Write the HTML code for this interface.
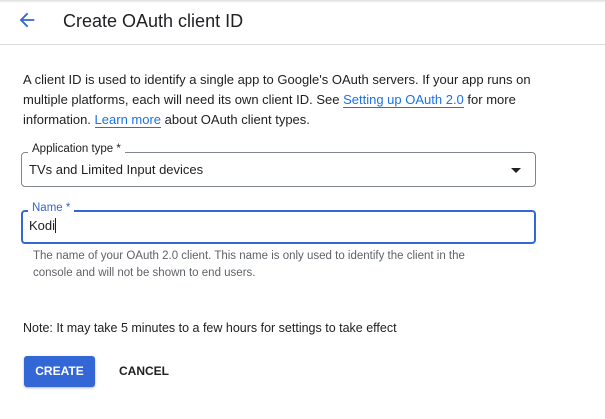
<!DOCTYPE html>
<html><head><style>
body{margin:0;width:605px;height:419px;background:#fff;font-family:"Liberation Sans",Arial,sans-serif;color:#202124;position:relative;overflow:hidden}
.a{position:absolute}
</style></head><body>
<div class="a" style="left:0;top:0;width:605px;height:3px;background:linear-gradient(#ddd,#fff)"></div>
<svg class="a" style="left:16px;top:9px" width="22" height="22" viewBox="0 0 24 24"><path d="M20 11H7.83l5.59-5.59L12 4l-8 8 8 8 1.41-1.41L7.83 13H20v-2z" fill="#3367d6"/></svg>
<div class="a" style="left:63px;top:11px;font-size:18px">Create OAuth client ID</div>
<div class="a" style="left:0;top:44px;width:605px;height:1px;background:#dadce0"></div>
<div class="a" style="left:23px;top:70px;width:520px;font-size:13px;line-height:20px;color:#202124">A client ID is used to identify a single app to Google's OAuth servers. If your app runs on multiple platforms, each will need its own client ID. See <span style="color:#1a73e8;border-bottom:1px solid #1a73e8">Setting up OAuth 2.0</span> for more information. <span style="color:#1a73e8;border-bottom:1px solid #1a73e8">Learn more</span> about OAuth client types.</div>
<div class="a" style="left:21px;top:152px;width:513px;height:33px;border:1px solid #80868b;border-radius:4px"></div>
<div class="a" style="left:28px;top:143px;padding:0 4px;background:#fff;font-size:11.5px;color:#202124">Application type *</div>
<div class="a" style="left:29px;top:162px;font-size:13px">TVs and Limited Input devices</div>
<div class="a" style="left:511px;top:168px;width:0;height:0;border-left:5px solid transparent;border-right:5px solid transparent;border-top:5px solid #202124"></div>
<div class="a" style="left:21px;top:210px;width:511px;height:30px;border:2px solid #3367d6;border-radius:4px"></div>
<div class="a" style="left:28px;top:202px;padding:0 4px;background:#fff;font-size:11.5px;color:#3367d6">Name *</div>
<div class="a" style="left:29px;top:218px;font-size:13px">Kodi<span style="display:inline-block;width:1px;height:15px;background:#202124;vertical-align:-3px"></span></div>
<div class="a" style="left:33px;top:248px;width:455px;font-size:11.5px;line-height:17px;color:#5f6368">The name of your OAuth 2.0 client. This name is only used to identify the client in the console and will not be shown to end users.</div>
<div class="a" style="left:23px;top:321px;font-size:12.5px">Note: It may take 5 minutes to a few hours for settings to take effect</div>
<div class="a" style="left:24px;top:356px;width:71px;height:31px;background:#3367d6;border-radius:3px;box-shadow:0 1px 2px rgba(0,0,0,.3);color:#fff;font-size:12px;font-weight:bold;text-align:center;line-height:31px">CREATE</div>
<div class="a" style="left:119px;top:356px;height:31px;line-height:31px;font-size:12px;font-weight:bold">CANCEL</div>
</body></html>
